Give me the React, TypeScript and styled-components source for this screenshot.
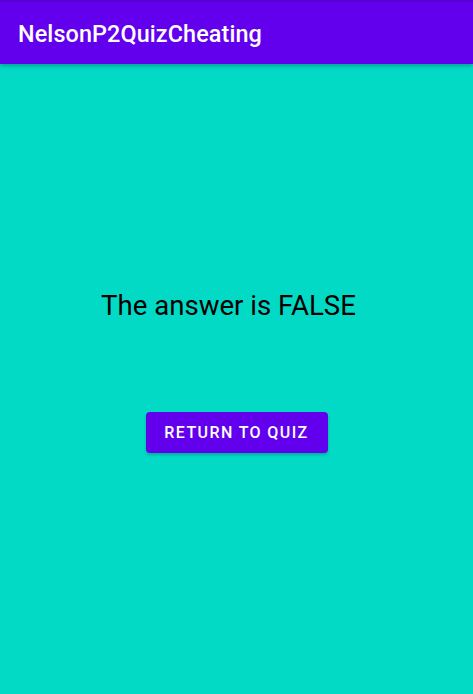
import React from "react";
import styled, { createGlobalStyle } from "styled-components";

const GlobalStyle = createGlobalStyle`
  html, body {
    margin: 0;
    padding: 0;
    height: 100%;
    background: #03dac5;
    font-family: Roboto, "Noto Sans", sans-serif;
  }
  #root {
    height: 100%;
  }
`;

const Screen = styled.div`
  height: 100vh;
  display: flex;
  flex-direction: column;
  background: #03dac5;
`;

const AppBar = styled.header`
  height: 64px;
  box-sizing: border-box;
  border-top: 2px solid #5700d6;
  background: #6200ee;
  display: flex;
  align-items: center;
  padding: 0 18px;
  box-shadow: 0 2px 4px rgba(0, 0, 0, 0.25);
  position: relative;
  z-index: 1;
`;

const Title = styled.h1`
  margin: 0;
  margin-top: 2px;
  color: #ffffff;
  font-size: 23.4px;
  font-weight: 500;
  letter-spacing: 0.1px;
`;

const Content = styled.main`
  flex: 1;
  display: flex;
  flex-direction: column;
  align-items: center;
  padding-top: 226px;
`;

const Answer = styled.p`
  margin: 0 16px 0 0;
  font-size: 27.6px;
  line-height: 32px;
  color: #000000;
`;

const ReturnButton = styled.button`
  margin-top: 90px;
  width: 182px;
  height: 41px;
  border: none;
  border-radius: 4px;
  background: #6200ee;
  color: #ffffff;
  font-family: Roboto, "Noto Sans", sans-serif;
  font-size: 16px;
  font-weight: 500;
  letter-spacing: 1.4px;
  text-transform: uppercase;
  box-shadow: 0 2px 3px rgba(0, 0, 0, 0.2);
  cursor: pointer;
`;

export default function App() {
  return (
    <Screen>
      <GlobalStyle />
      <AppBar>
        <Title>NelsonP2QuizCheating</Title>
      </AppBar>
      <Content>
        <Answer>The answer is FALSE</Answer>
        <ReturnButton>Return to quiz</ReturnButton>
      </Content>
    </Screen>
  );
}
